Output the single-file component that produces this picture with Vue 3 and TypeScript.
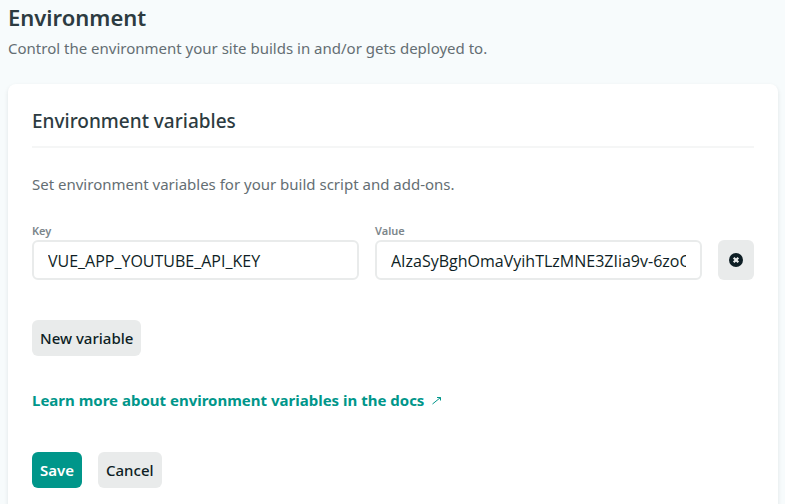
<script setup lang="ts">
import { ref } from 'vue'

interface EnvVariable {
  id: number
  key: string
  value: string
}

const saved: EnvVariable[] = [
  { id: 1, key: 'VUE_APP_YOUTUBE_API_KEY', value: 'AIzaSyBghOmaVyihTLzMNE3ZIia9v-6zoOq' },
]

const copy = (list: EnvVariable[]): EnvVariable[] => list.map((item) => ({ ...item }))

const stored = ref<EnvVariable[]>(copy(saved))
const variables = ref<EnvVariable[]>(copy(saved))
let nextId = 2

function addVariable(): void {
  variables.value.push({ id: nextId++, key: '', value: '' })
}

function removeVariable(id: number): void {
  variables.value = variables.value.filter((item) => item.id !== id)
}

function save(): void {
  stored.value = copy(variables.value)
}

function cancel(): void {
  variables.value = copy(stored.value)
}
</script>

<template>
  <main class="page">
    <header class="page-header">
      <h1>Environment</h1>
      <p>Control the environment your site builds in and/or gets deployed to.</p>
    </header>

    <section class="card">
      <h2>Environment variables</h2>
      <p class="description">Set environment variables for your build script and add-ons.</p>

      <form @submit.prevent="save">
        <div v-for="item in variables" :key="item.id" class="row">
          <div class="field">
            <label :for="`key-${item.id}`">Key</label>
            <input :id="`key-${item.id}`" v-model="item.key" type="text" spellcheck="false" />
          </div>
          <div class="field">
            <label :for="`value-${item.id}`">Value</label>
            <input :id="`value-${item.id}`" v-model="item.value" type="text" spellcheck="false" />
          </div>
          <button type="button" class="button remove" aria-label="Delete variable" @click="removeVariable(item.id)">
            <svg width="14" height="14" viewBox="0 0 14 14" aria-hidden="true">
              <circle cx="7" cy="7" r="7" fill="#0e1e25" />
              <path d="M4.7 4.7l4.6 4.6M9.3 4.7l-4.6 4.6" stroke="#e9ebeb" stroke-width="2.2" />
            </svg>
          </button>
        </div>

        <button type="button" class="button add" @click="addVariable">New variable</button>

        <a class="docs" href="#docs">
          Learn more about environment variables in the docs
          <svg width="10" height="10" viewBox="0 0 10 10" aria-hidden="true">
            <path d="M0.5 9L8.5 2.5M5 2.5h3.5v3" fill="none" stroke="currentColor" stroke-width="1" />
          </svg>
        </a>

        <div class="actions">
          <button type="submit" class="button primary">Save</button>
          <button type="button" class="button" @click="cancel">Cancel</button>
        </div>
      </form>
    </section>
  </main>
</template>

<style>
body {
  background: #f7fbfc;
  overflow-x: hidden;
}
</style>

<style scoped>
.page {
  padding: 0 7px 0 8px;
  color: #2d3b41;
  font-family: "Segoe UI", "Noto Sans", "Open Sans", sans-serif;
  font-size: 15px;
  line-height: 24px;
}

h1,
h2,
p {
  margin: 0;
}

h1 {
  padding-top: 1px;
  font-size: 22px;
  font-weight: 600;
  line-height: 32px;
}

.page-header p {
  padding-top: 3px;
}

.page-header p,
.description {
  color: #646e73;
}

.card {
  margin-top: 24px;
  padding: 24px;
  border-radius: 8px;
  background: #fff;
  box-shadow: 0 2px 4px rgba(14, 30, 37, 0.1);
}

h2 {
  padding-bottom: 12px;
  border-bottom: 2px solid #f5f6f6;
  font-size: 19px;
  font-weight: 500;
  line-height: 26px;
}

.description {
  padding: 24px 0 26px;
}

.row {
  display: flex;
  align-items: flex-end;
  gap: 16px;
}

.field {
  flex: 1;
  min-width: 0;
}

label {
  display: block;
  color: #7c868b;
  font-size: 11px;
  font-weight: 600;
  line-height: 18px;
}

input {
  display: block;
  box-sizing: border-box;
  width: 100%;
  height: 40px;
  padding: 2px 14px 0;
  border: 2px solid #e9ebeb;
  border-radius: 6px;
  background: #fff;
  color: #0e1e25;
  font: inherit;
  font-family: "Segoe UI", "Open Sans", "Noto Sans", sans-serif;
  font-size: 16px;
}

input:focus {
  border-color: #00968a;
  outline: none;
}

.button {
  height: 36px;
  padding: 0 8px;
  border: 0;
  border-radius: 6px;
  background: #e9ebeb;
  color: #0e1e25;
  font: inherit;
  font-weight: 500;
  cursor: pointer;
}

.remove {
  display: flex;
  align-items: center;
  justify-content: center;
  width: 36px;
  height: 40px;
  padding: 0;
}

.add {
  display: block;
  margin-top: 40px;
}

.docs {
  display: flex;
  align-items: center;
  gap: 8px;
  width: fit-content;
  margin-top: 32px;
  color: #00968a;
  font-weight: 700;
  text-decoration: none;
}

.actions {
  display: flex;
  gap: 16px;
  margin-top: 40px;
}

.primary {
  background: #00968a;
  color: #fff;
  font-weight: 600;
}
</style>
